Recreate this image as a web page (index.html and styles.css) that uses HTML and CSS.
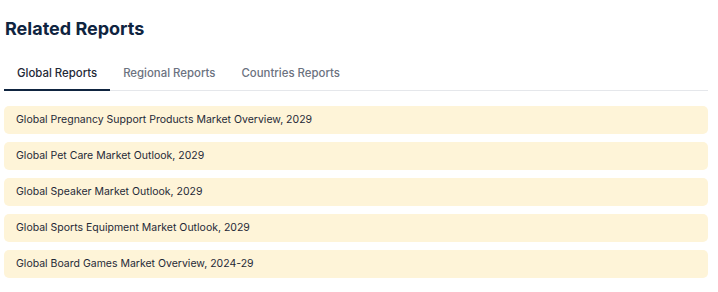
FILE: index.html
```html
<!DOCTYPE html>
<html lang="en">
<head>
    <meta charset="UTF-8">
    <meta name="viewport" content="width=device-width, initial-scale=1.0">
    <title>Related Reports</title>
    <link rel="stylesheet" href="styles.css">
</head>
<body>
<section class="related">
    <h2 class="related-title">Related Reports</h2>

    <div class="tabs">
        <button class="tab active">Global Reports</button>
        <button class="tab">Regional Reports</button>
        <button class="tab">Countries Reports</button>
    </div>

    <ul class="report-list">
        <li><a href="#">Global Pregnancy Support Products Market Overview, 2029</a></li>
        <li><a href="#">Global Pet Care Market Outlook, 2029</a></li>
        <li><a href="#">Global Speaker Market Outlook, 2029</a></li>
        <li><a href="#">Global Sports Equipment Market Outlook, 2029</a></li>
        <li><a href="#">Global Board Games Market Overview, 2024-29</a></li>
    </ul>
</section>
</body>
</html>
```

FILE: styles.css
```css
body {
  font-family: Inter, "Noto Sans", sans-serif;
  margin: 0;
  padding: 0;
  background-color: white;
  color: #1f2937;
}

.related {
  width: 704px;
  padding: 16px 10px 0 4px;
}

.related-title {
  margin: 0 0 17px 1px;
  font-size: 18px;
  font-weight: 700;
  line-height: 26px;
  color: #0f2440;
}

/* Tabs */
.tabs {
  display: flex;
  border-bottom: 1px solid #e5e7eb;
  margin-bottom: 15px;
}

.tab {
  font-family: inherit;
  font-size: 11.4px;
  font-weight: 500;
  color: #6b7280;
  background: none;
  border: none;
  border-bottom: 2px solid transparent;
  margin-bottom: -1px;
  padding: 7px 13px 9px 13px;
  cursor: pointer;
}

.tab.active {
  color: #1f2937;
  border-bottom-color: #0f2440;
}

/* Report list */
.report-list {
  list-style: none;
  padding: 0;
  margin: 0;
  display: flex;
  flex-direction: column;
  gap: 8px;
}

.report-list li {
  background-color: #fef4d8;
  border-radius: 5px;
}

.report-list a {
  display: block;
  padding: 7px 12px;
  font-size: 10.5px;
  line-height: 14px;
  color: #1f2937;
  text-decoration: none;
}

.report-list a:hover {
  text-decoration: underline;
}
```
